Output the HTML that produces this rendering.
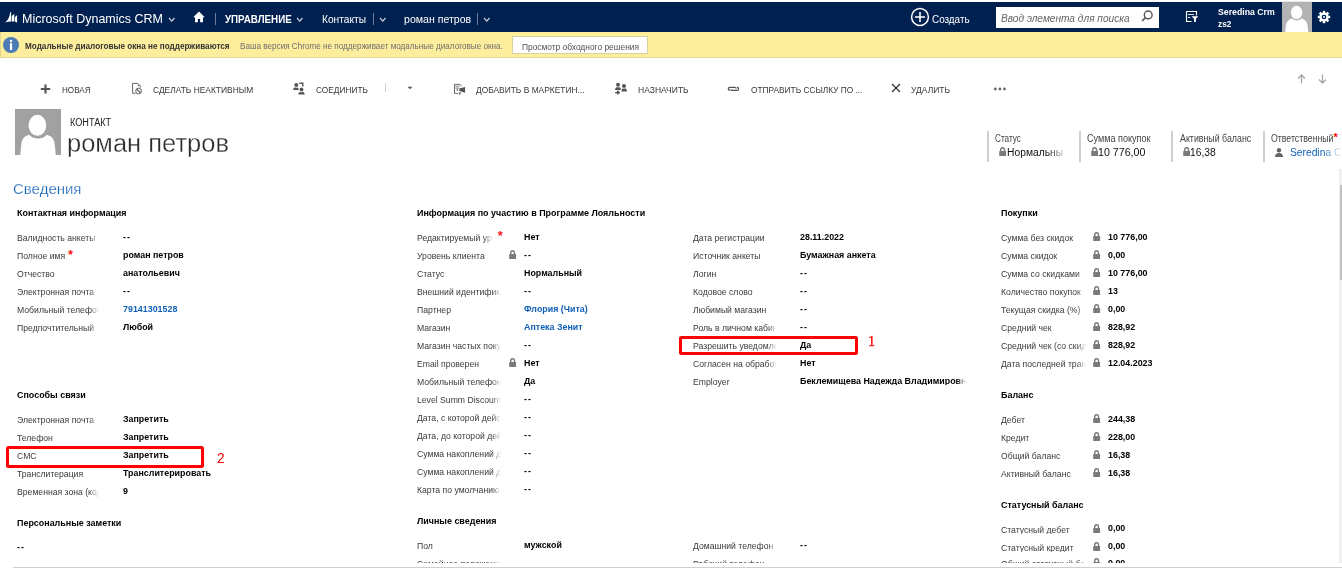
<!DOCTYPE html>
<html><head><meta charset="utf-8"><style>
html,body{margin:0;padding:0;background:#fff;width:1342px;height:568px;overflow:hidden;}
body{position:relative;font-family:"Liberation Sans", sans-serif;}
.t{position:absolute;white-space:nowrap;}
.i{display:inline-block;transform-origin:0 0;}
.r{position:absolute;}
svg.r{overflow:visible;}
</style></head><body>
<div class="r" style="left:0px;top:0px;width:1342px;height:2px;background:#ffffff;"></div>
<div class="r" style="left:1282px;top:1px;width:30px;height:1px;background:#e6e6e6;"></div>
<div class="r" style="left:0px;top:2px;width:1342px;height:30px;background:#002050;"></div>
<svg class="r" style="left:2px;top:8px" width="20" height="18" viewBox="0 0 20 18"><path d="M3 14.4 Q7 11.8 8.4 3.9 L9.1 3.7 L9.1 13.4 Q6 13.5 3 14.4 Z M9.7 13.4 L9.7 8.2 Q10.8 6.6 11.7 6.2 L12.3 6.2 L12.3 13.4 Z M12.9 13.5 L12.9 9.4 Q13.8 7.9 14.6 7.4 L15.1 7.4 L15.1 14.8 Q14 13.7 12.9 13.5 Z" fill="#fff"/></svg>
<div class="t" style="left:21.50px;top:13.03px;font-size:12.6px;line-height:12.6px;font-weight:400;color:#fff;"><span class="i" style="transform:scaleX(0.9926)">Microsoft Dynamics CRM</span></div>
<svg class="r" style="left:168px;top:17.0px" width="7.5" height="5.2" viewBox="0 0 7.5 5.2"><path d="M1 1 L3.75 4.2 L6.5 1" fill="none" stroke="#d0d6e0" stroke-width="1.2"/></svg>
<svg class="r" style="left:193px;top:11px" width="12" height="12" viewBox="0 0 12 12"><path d="M6 0.6 L0.2 6.2 L2 6.2 L2 11.2 L4.9 11.2 L4.9 8 L7.1 8 L7.1 11.2 L10 11.2 L10 6.2 L11.8 6.2 Z" fill="#fff"/></svg>
<div class="r" style="left:215px;top:13px;width:1px;height:12px;background:#6d7a96;"></div>
<div class="t" style="left:225.30px;top:14.09px;font-size:11px;line-height:11px;font-weight:700;color:#fff;"><span class="i" style="transform:scaleX(0.8895)">УПРАВЛЕНИЕ</span></div>
<svg class="r" style="left:296px;top:17.0px" width="7.5" height="5.2" viewBox="0 0 7.5 5.2"><path d="M1 1 L3.75 4.2 L6.5 1" fill="none" stroke="#c9d1de" stroke-width="1.2"/></svg>
<div class="t" style="left:322.00px;top:14.09px;font-size:11px;line-height:11px;font-weight:400;color:#fff;"><span class="i" style="transform:scaleX(0.9260)">Контакты</span></div>
<div class="r" style="left:373px;top:13px;width:1px;height:12px;background:#6d7a96;"></div>
<svg class="r" style="left:378.5px;top:17.0px" width="7.5" height="5.2" viewBox="0 0 7.5 5.2"><path d="M1 1 L3.75 4.2 L6.5 1" fill="none" stroke="#c9d1de" stroke-width="1.2"/></svg>
<div class="t" style="left:403.70px;top:14.09px;font-size:11px;line-height:11px;font-weight:400;color:#fff;"><span class="i" style="transform:scaleX(0.9617)">роман петров</span></div>
<div class="r" style="left:477px;top:13px;width:1px;height:12px;background:#6d7a96;"></div>
<svg class="r" style="left:482.5px;top:17.0px" width="7.5" height="5.2" viewBox="0 0 7.5 5.2"><path d="M1 1 L3.75 4.2 L6.5 1" fill="none" stroke="#c9d1de" stroke-width="1.2"/></svg>
<svg class="r" style="left:910px;top:7px" width="20" height="20" viewBox="0 0 20 20"><circle cx="10" cy="10" r="8.4" fill="none" stroke="#fff" stroke-width="1.5"/><path d="M10 5 V15 M5 10 H15" stroke="#fff" stroke-width="1.6"/></svg>
<div class="t" style="left:932.30px;top:14.39px;font-size:11px;line-height:11px;font-weight:400;color:#fff;"><span class="i" style="transform:scaleX(0.8993)">Создать</span></div>
<div class="r" style="left:996px;top:7px;width:163px;height:21px;background:#fff;"></div>
<div class="t" style="left:1000.80px;top:12.71px;font-size:10.5px;line-height:10.5px;font-weight:400;color:#666;font-style:italic;"><span class="i" style="transform:scaleX(0.9651)">Ввод элемента для поиска</span></div>
<svg class="r" style="left:1140px;top:10px" width="14" height="14" viewBox="0 0 14 14"><circle cx="8.2" cy="4.9" r="3.9" fill="none" stroke="#555" stroke-width="1.4"/><path d="M5.4 7.7 L2.2 10.9" stroke="#555" stroke-width="1.6"/></svg>
<svg class="r" style="left:1185px;top:10px" width="14" height="13" viewBox="0 0 14 13"><path d="M1.5 1.5 H11.5 V5.5 M1.5 1.5 V11.5 H6.5" fill="none" stroke="#fff" stroke-width="1.15"/><path d="M3 4.5 H9 M3 7.5 H5.3" stroke="#dfe3ea" stroke-width="1"/><path d="M6.6 6.2 H13.3 L10.9 9 V12 H9.1 V9 Z" fill="#fff" stroke="#002050" stroke-width="1" paint-order="stroke"/></svg>
<div class="t" style="left:1217.80px;top:7.26px;font-size:9.5px;line-height:9.5px;font-weight:700;color:#fff;"><span class="i" style="transform:scaleX(0.9178)">Seredina Crm</span></div>
<div class="t" style="left:1217.80px;top:19.46px;font-size:9.5px;line-height:9.5px;font-weight:700;color:#fff;"><span class="i" style="transform:scaleX(0.8700)">zs2</span></div>
<div class="r" style="left:1282px;top:2px;width:30px;height:30px;background:#b3b3b3;"></div>
<svg class="r" style="left:1282px;top:2px" width="30" height="30" viewBox="0 0 30 30"><ellipse cx="14.6" cy="10.4" rx="5.7" ry="6.7" fill="#fff"/><path d="M3.2 30 L3.8 23.5 C4.2 20 6 18 9.5 16.6 C11.5 18 13 18.4 14.7 18.4 C16.4 18.4 18 18 20 16.6 C23.5 18 25.3 20 25.6 23.5 L26.2 30 Z" fill="#fff"/></svg>
<svg class="r" style="left:1317px;top:10px" width="14" height="14" viewBox="0 0 14 14"><g transform="translate(7 7)" fill="#fff"><circle r="4.6"/><rect x="-1.25" y="-6.2" width="2.5" height="3" transform="rotate(0)"/><rect x="-1.25" y="-6.2" width="2.5" height="3" transform="rotate(45)"/><rect x="-1.25" y="-6.2" width="2.5" height="3" transform="rotate(90)"/><rect x="-1.25" y="-6.2" width="2.5" height="3" transform="rotate(135)"/><rect x="-1.25" y="-6.2" width="2.5" height="3" transform="rotate(180)"/><rect x="-1.25" y="-6.2" width="2.5" height="3" transform="rotate(225)"/><rect x="-1.25" y="-6.2" width="2.5" height="3" transform="rotate(270)"/><rect x="-1.25" y="-6.2" width="2.5" height="3" transform="rotate(315)"/><circle r="2.3" fill="#002050"/><circle r="1.0" fill="#fff"/></g></svg>
<div class="r" style="left:0px;top:32px;width:1342px;height:26px;background:#fdee9e;box-shadow:inset 1px 0 0 #e2d68c, inset 0 -1px 0 #e0d995;"></div>
<svg class="r" style="left:3px;top:37px" width="16" height="16" viewBox="0 0 16 16"><circle cx="8" cy="8" r="8" fill="#4c7bb5"/><rect x="6.9" y="6.2" width="2.2" height="6.8" fill="#fff"/><circle cx="8" cy="4" r="1.25" fill="#fff"/></svg>
<div class="t" style="left:24.60px;top:41.68px;font-size:9px;line-height:9px;font-weight:700;color:#333;"><span class="i" style="transform:scaleX(0.9072)">Модальные диалоговые окна не поддерживаются</span></div>
<div class="t" style="left:239.70px;top:41.68px;font-size:9px;line-height:9px;font-weight:400;color:#6f6f6f;"><span class="i" style="transform:scaleX(0.9043)">Ваша версия Chrome не поддерживает модальные диалоговые окна.</span></div>
<div class="r" style="left:512px;top:36px;width:136px;height:18px;background:#fff;box-sizing:border-box;border:1px solid #d9d29c;"></div>
<div class="t" style="left:522.00px;top:42.62px;font-size:8.6px;line-height:8.6px;font-weight:400;color:#505050;"><span class="i" style="transform:scaleX(0.9755)">Просмотр обходного решения</span></div>
<svg class="r" style="left:40px;top:84px" width="11" height="10" viewBox="0 0 11 10"><path d="M5.5 0.5 V9.5 M0.8 5 H10.2" stroke="#555" stroke-width="2.2"/></svg>
<div class="t" style="left:62.20px;top:85.37px;font-size:9.6px;line-height:9.6px;font-weight:400;color:#383838;"><span class="i" style="transform:scaleX(0.8458)">НОВАЯ</span></div>
<svg class="r" style="left:131px;top:82px" width="12" height="13" viewBox="0 0 12 13"><path d="M4.3 11.3 H1.6 V1.4 H6.6 L9.3 4.1 V5.6" fill="none" stroke="#666" stroke-width="1"/><path d="M6.8 1.4 L9.3 4 L7 4 Z" fill="#777"/><circle cx="7.6" cy="9" r="2.9" fill="none" stroke="#666" stroke-width="1"/><path d="M5.6 7 L9.6 11" stroke="#666" stroke-width="1.3"/></svg>
<div class="t" style="left:153.00px;top:85.37px;font-size:9.6px;line-height:9.6px;font-weight:400;color:#383838;"><span class="i" style="transform:scaleX(0.8769)">СДЕЛАТЬ НЕАКТИВНЫМ</span></div>
<svg class="r" style="left:292px;top:82px" width="14" height="13" viewBox="0 0 14 13"><circle cx="4.3" cy="2.9" r="2.0" fill="#555"/><path d="M1.1 8.1 Q1.2 5.5 3.5 5.3 L4.3 6.3 L5.1 5.3 Q6.6 5.5 6.8 8.1 Z" fill="#555"/><path d="M7.3 1.3 H10.8 V4.5" fill="none" stroke="#555" stroke-width="1.4"/><circle cx="9.5" cy="7.4" r="1.9" fill="#555"/><path d="M6.2 12.4 Q6.4 9.8 8.7 9.7 L9.5 10.6 L10.3 9.7 Q12.6 9.8 12.8 12.4 Z" fill="#555"/></svg>
<div class="t" style="left:315.80px;top:85.37px;font-size:9.6px;line-height:9.6px;font-weight:400;color:#383838;"><span class="i" style="transform:scaleX(0.8657)">СОЕДИНИТЬ</span></div>
<div class="r" style="left:385px;top:83px;width:1px;height:9px;background:#d0d0d0;"></div>
<svg class="r" style="left:407px;top:86px" width="6" height="4" viewBox="0 0 6 4"><path d="M0.5 0.8 H5.5 L3 3.3 Z" fill="#555"/></svg>
<svg class="r" style="left:452px;top:82px" width="14" height="13" viewBox="0 0 14 13"><path d="M6 11.4 H2.5 V2.4 H8 L9.6 4.2" fill="none" stroke="#666" stroke-width="1"/><path d="M3.4 4.3 H7.3 M3.4 6.1 H7.3" stroke="#777" stroke-width="0.9"/><rect x="4.8" y="6.9" width="1.1" height="1.9" fill="#555"/><path d="M7.3 6.6 L13.1 5 V10.8 L7.3 9 Z" fill="#555"/><rect x="7.1" y="10.1" width="1.4" height="2.4" fill="#555"/></svg>
<div class="t" style="left:475.50px;top:85.37px;font-size:9.6px;line-height:9.6px;font-weight:400;color:#383838;"><span class="i" style="transform:scaleX(0.8743)">ДОБАВИТЬ В МАРКЕТИН...</span></div>
<svg class="r" style="left:613px;top:82px" width="15" height="13" viewBox="0 0 15 13"><circle cx="5" cy="2.7" r="1.95" fill="#555"/><path d="M2 7.9 Q2.1 5.1 4.2 4.9 L5 5.8 L5.8 4.9 Q7.9 5.1 8 7.9 Z" fill="#555"/><circle cx="11" cy="3.9" r="2.0" fill="#555"/><path d="M8.4 9.5 Q8.5 6.4 10.2 6.2 L11 7.1 L11.8 6.2 Q13.9 6.4 14 9.5 Z" fill="#555"/><path d="M2 10.6 H5.8 M4.2 8.9 L6.2 10.6 L4.2 12.3" fill="none" stroke="#555" stroke-width="1.4"/></svg>
<div class="t" style="left:637.60px;top:85.37px;font-size:9.6px;line-height:9.6px;font-weight:400;color:#383838;"><span class="i" style="transform:scaleX(0.8887)">НАЗНАЧИТЬ</span></div>
<svg class="r" style="left:727px;top:85px" width="13" height="7" viewBox="0 0 13 7"><path d="M3 5.4 Q1.3 5.4 1.3 3.85 Q1.3 2.3 3 2.3 H7.6 Q9 2.3 9.4 3.5 M10 2.3 Q11.7 2.3 11.7 3.85 Q11.7 5.4 10 5.4 H5.4 Q4 5.4 3.6 4.2" fill="none" stroke="#555" stroke-width="1.25"/></svg>
<div class="t" style="left:750.90px;top:85.37px;font-size:9.6px;line-height:9.6px;font-weight:400;color:#383838;"><span class="i" style="transform:scaleX(0.8661)">ОТПРАВИТЬ ССЫЛКУ ПО ...</span></div>
<svg class="r" style="left:891px;top:83px" width="10" height="10" viewBox="0 0 10 10"><path d="M1 1 L9 9 M9 1 L1 9" stroke="#333" stroke-width="1.2"/></svg>
<div class="t" style="left:911.40px;top:85.37px;font-size:9.6px;line-height:9.6px;font-weight:400;color:#383838;"><span class="i" style="transform:scaleX(0.8861)">УДАЛИТЬ</span></div>
<svg class="r" style="left:993px;top:87px" width="14" height="4" viewBox="0 0 14 4"><circle cx="2.3" cy="2" r="1.4" fill="#666"/><circle cx="6.9" cy="2" r="1.4" fill="#666"/><circle cx="11.5" cy="2" r="1.4" fill="#666"/></svg>
<svg class="r" style="left:1297px;top:73.5px" width="9" height="10" viewBox="0 0 9 10"><path d="M4.5 1 V9.2 M1 4.5 L4.5 1 L8 4.5" fill="none" stroke="#a6a6a6" stroke-width="1.3"/></svg>
<svg class="r" style="left:1318px;top:73.5px" width="9" height="10" viewBox="0 0 9 10"><path d="M4.5 0.6 V9 M1 5.5 L4.5 9 L8 5.5" fill="none" stroke="#a6a6a6" stroke-width="1.3"/></svg>
<div class="r" style="left:15px;top:109px;width:46px;height:46px;background:#a1a1a1;"></div>
<svg class="r" style="left:15px;top:109px" width="46" height="46" viewBox="0 0 46 46"><ellipse cx="22.4" cy="16.3" rx="8.9" ry="10.5" fill="#fff"/><path d="M5.2 46 L6.3 35.5 C6.8 30 9 27.5 14 25.8 C17 28.5 19.5 29.5 23 29.6 C26.5 29.5 29 28.5 32 25.8 C37 27.5 39.2 30 39.7 35.5 L40.8 46 Z" fill="#fff"/></svg>
<div class="t" style="left:70.30px;top:118.13px;font-size:10.0px;line-height:10.0px;font-weight:400;color:#222;"><span class="i" style="transform:scaleX(0.9137)">КОНТАКТ</span></div>
<div class="t" style="left:67.40px;top:130.49px;font-size:26px;line-height:26px;font-weight:400;color:#2a2a2a;-webkit-text-stroke:0.35px #fff;"><span class="i" style="transform:scaleX(0.9809)">роман петров</span></div>
<div class="r" style="left:987px;top:131px;width:2px;height:31px;background:#cfcfcf;"></div>
<div class="r" style="left:1079px;top:131px;width:2px;height:31px;background:#cfcfcf;"></div>
<div class="r" style="left:1171px;top:131px;width:2px;height:31px;background:#cfcfcf;"></div>
<div class="r" style="left:1263px;top:131px;width:2px;height:31px;background:#cfcfcf;"></div>
<div class="t" style="left:995.20px;top:133.94px;font-size:10.0px;line-height:10.0px;font-weight:400;color:#444;"><span class="i" style="transform:scaleX(0.8190)">Статус</span></div>
<div class="t" style="left:1087.20px;top:133.94px;font-size:10.0px;line-height:10.0px;font-weight:400;color:#444;"><span class="i" style="transform:scaleX(0.9069)">Сумма покупок</span></div>
<div class="t" style="left:1179.60px;top:133.94px;font-size:10.0px;line-height:10.0px;font-weight:400;color:#444;"><span class="i" style="transform:scaleX(0.8822)">Активный баланс</span></div>
<div class="t" style="left:1271.30px;top:133.94px;font-size:10.0px;line-height:10.0px;font-weight:400;color:#444;"><span class="i" style="transform:scaleX(0.8751)">Ответственный</span></div>
<div class="t" style="left:1333.60px;top:131.69px;font-size:11px;line-height:11px;font-weight:700;color:#f00;"><span class="i" >*</span></div>
<svg class="r" style="left:998.8px;top:146.9px" width="8" height="9" viewBox="0 0 8 9"><path d="M1.7 4.2 V3.1 Q1.7 0.7 3.6 0.7 Q5.5 0.7 5.5 3.1 V4.2" fill="none" stroke="#7b7b7b" stroke-width="1.4"/><rect x="0.2" y="4" width="6.9" height="4.9" rx="0.4" fill="#7b7b7b"/></svg>
<div class="t" style="left:1006.90px;top:147.94px;font-size:10.0px;line-height:10.0px;font-weight:400;color:#111;width:62px;overflow:hidden;-webkit-mask-image:linear-gradient(to right,#000 40px,transparent 62px);"><span class="i" style="transform:scaleX(1.0300)">Нормальны</span></div>
<svg class="r" style="left:1090.8px;top:146.9px" width="8" height="9" viewBox="0 0 8 9"><path d="M1.7 4.2 V3.1 Q1.7 0.7 3.6 0.7 Q5.5 0.7 5.5 3.1 V4.2" fill="none" stroke="#7b7b7b" stroke-width="1.4"/><rect x="0.2" y="4" width="6.9" height="4.9" rx="0.4" fill="#7b7b7b"/></svg>
<div class="t" style="left:1098.30px;top:147.94px;font-size:10.0px;line-height:10.0px;font-weight:400;color:#111;"><span class="i" style="transform:scaleX(1.0652)">10 776,00</span></div>
<svg class="r" style="left:1182.8px;top:146.9px" width="8" height="9" viewBox="0 0 8 9"><path d="M1.7 4.2 V3.1 Q1.7 0.7 3.6 0.7 Q5.5 0.7 5.5 3.1 V4.2" fill="none" stroke="#7b7b7b" stroke-width="1.4"/><rect x="0.2" y="4" width="6.9" height="4.9" rx="0.4" fill="#7b7b7b"/></svg>
<div class="t" style="left:1189.80px;top:147.94px;font-size:10.0px;line-height:10.0px;font-weight:400;color:#111;"><span class="i" style="transform:scaleX(1.0267)">16,38</span></div>
<svg class="r" style="left:1275px;top:148px" width="8" height="9" viewBox="0 0 8 9"><circle cx="4" cy="2.3" r="2.2" fill="#666"/><path d="M0 9 Q0 5 4 5 Q8 5 8 9 Z" fill="#666"/></svg>
<div class="t" style="left:1289.90px;top:147.68px;font-size:10.3px;line-height:10.3px;font-weight:400;color:#1160b7;width:52px;overflow:hidden;-webkit-mask-image:linear-gradient(to right,#000 32px,transparent 52px);"><span class="i" style="transform:scaleX(1.0000)">Seredina C</span></div>
<div class="r" style="left:1339px;top:169px;width:3px;height:394px;background:#f0f0f0;"></div>
<div class="r" style="left:1340px;top:185px;width:2px;height:95px;background:#c2c2c2;"></div>
<div class="r" style="left:13px;top:567px;width:1329px;height:1px;background:#cfcfcf;"></div>
<div class="t" style="left:13.30px;top:181.35px;font-size:15.3px;line-height:15.3px;font-weight:400;color:#1462b8;-webkit-text-stroke:0.25px #fff;"><span class="i" style="transform:scaleX(0.9801)">Сведения</span></div>
<div class="t" style="left:16.50px;top:207.86px;font-size:9.5px;line-height:9.5px;font-weight:700;color:#000;"><span class="i" style="transform:scaleX(0.9400)">Контактная информация</span></div>
<div class="t" style="left:16.50px;top:233.46px;font-size:9.5px;line-height:9.5px;font-weight:400;color:#3a3a3a;width:82px;overflow:hidden;-webkit-mask-image:linear-gradient(to right,#000 73px,transparent 82px);"><span class="i" style="transform:scaleX(0.9100)">Валидность анкеты</span></div>
<div class="t" style="left:123.00px;top:231.96px;font-size:9.5px;line-height:9.5px;font-weight:700;color:#000;letter-spacing:1.1px;"><span class="i" style="transform:scaleX(0.9350)">--</span></div>
<div class="t" style="left:16.50px;top:251.46px;font-size:9.5px;line-height:9.5px;font-weight:400;color:#3a3a3a;width:82px;overflow:hidden;-webkit-mask-image:linear-gradient(to right,#000 73px,transparent 82px);"><span class="i" style="transform:scaleX(0.9100)">Полное имя</span></div>
<div class="t" style="left:67.90px;top:247.60px;font-size:13px;line-height:13px;font-weight:400;color:#f00;-webkit-text-stroke:0.25px #f00;"><span class="i" >*</span></div>
<div class="t" style="left:123.00px;top:249.96px;font-size:9.5px;line-height:9.5px;font-weight:700;color:#000;"><span class="i" style="transform:scaleX(0.9350)">роман петров</span></div>
<div class="t" style="left:16.50px;top:269.46px;font-size:9.5px;line-height:9.5px;font-weight:400;color:#3a3a3a;width:82px;overflow:hidden;-webkit-mask-image:linear-gradient(to right,#000 73px,transparent 82px);"><span class="i" style="transform:scaleX(0.9100)">Отчество</span></div>
<div class="t" style="left:123.00px;top:267.96px;font-size:9.5px;line-height:9.5px;font-weight:700;color:#000;"><span class="i" style="transform:scaleX(0.9350)">анатольевич</span></div>
<div class="t" style="left:16.50px;top:287.46px;font-size:9.5px;line-height:9.5px;font-weight:400;color:#3a3a3a;width:82px;overflow:hidden;-webkit-mask-image:linear-gradient(to right,#000 73px,transparent 82px);"><span class="i" style="transform:scaleX(0.9100)">Электронная почта</span></div>
<div class="t" style="left:123.00px;top:285.96px;font-size:9.5px;line-height:9.5px;font-weight:700;color:#000;letter-spacing:1.1px;"><span class="i" style="transform:scaleX(0.9350)">--</span></div>
<div class="t" style="left:16.50px;top:305.46px;font-size:9.5px;line-height:9.5px;font-weight:400;color:#3a3a3a;width:82px;overflow:hidden;-webkit-mask-image:linear-gradient(to right,#000 73px,transparent 82px);"><span class="i" style="transform:scaleX(0.9100)">Мобильный телефон</span></div>
<div class="t" style="left:123.00px;top:303.96px;font-size:9.5px;line-height:9.5px;font-weight:700;color:#1160b7;"><span class="i" style="transform:scaleX(0.9350)">79141301528</span></div>
<div class="t" style="left:16.50px;top:323.46px;font-size:9.5px;line-height:9.5px;font-weight:400;color:#3a3a3a;width:82px;overflow:hidden;-webkit-mask-image:linear-gradient(to right,#000 73px,transparent 82px);"><span class="i" style="transform:scaleX(0.9100)">Предпочтительный</span></div>
<div class="t" style="left:123.00px;top:321.96px;font-size:9.5px;line-height:9.5px;font-weight:700;color:#000;"><span class="i" style="transform:scaleX(0.9350)">Любой</span></div>
<div class="t" style="left:16.50px;top:390.46px;font-size:9.5px;line-height:9.5px;font-weight:700;color:#000;"><span class="i" style="transform:scaleX(0.9400)">Способы связи</span></div>
<div class="t" style="left:16.50px;top:415.46px;font-size:9.5px;line-height:9.5px;font-weight:400;color:#3a3a3a;width:82px;overflow:hidden;-webkit-mask-image:linear-gradient(to right,#000 73px,transparent 82px);"><span class="i" style="transform:scaleX(0.9100)">Электронная почта</span></div>
<div class="t" style="left:123.00px;top:413.96px;font-size:9.5px;line-height:9.5px;font-weight:700;color:#000;"><span class="i" style="transform:scaleX(0.9350)">Запретить</span></div>
<div class="t" style="left:16.50px;top:433.46px;font-size:9.5px;line-height:9.5px;font-weight:400;color:#3a3a3a;width:82px;overflow:hidden;-webkit-mask-image:linear-gradient(to right,#000 73px,transparent 82px);"><span class="i" style="transform:scaleX(0.9100)">Телефон</span></div>
<div class="t" style="left:123.00px;top:431.96px;font-size:9.5px;line-height:9.5px;font-weight:700;color:#000;"><span class="i" style="transform:scaleX(0.9350)">Запретить</span></div>
<div class="t" style="left:16.50px;top:451.46px;font-size:9.5px;line-height:9.5px;font-weight:400;color:#3a3a3a;width:82px;overflow:hidden;-webkit-mask-image:linear-gradient(to right,#000 73px,transparent 82px);"><span class="i" style="transform:scaleX(0.9100)">СМС</span></div>
<div class="t" style="left:123.00px;top:449.96px;font-size:9.5px;line-height:9.5px;font-weight:700;color:#000;"><span class="i" style="transform:scaleX(0.9350)">Запретить</span></div>
<div class="t" style="left:16.50px;top:469.46px;font-size:9.5px;line-height:9.5px;font-weight:400;color:#3a3a3a;width:82px;overflow:hidden;-webkit-mask-image:linear-gradient(to right,#000 73px,transparent 82px);"><span class="i" style="transform:scaleX(0.9100)">Транслитерация</span></div>
<div class="t" style="left:123.00px;top:467.96px;font-size:9.5px;line-height:9.5px;font-weight:700;color:#000;"><span class="i" style="transform:scaleX(0.9350)">Транслитерировать</span></div>
<div class="t" style="left:16.50px;top:487.46px;font-size:9.5px;line-height:9.5px;font-weight:400;color:#3a3a3a;width:82px;overflow:hidden;-webkit-mask-image:linear-gradient(to right,#000 73px,transparent 82px);"><span class="i" style="transform:scaleX(0.9100)">Временная зона (код)</span></div>
<div class="t" style="left:123.00px;top:485.96px;font-size:9.5px;line-height:9.5px;font-weight:700;color:#000;"><span class="i" style="transform:scaleX(0.9350)">9</span></div>
<div class="t" style="left:16.50px;top:518.26px;font-size:9.5px;line-height:9.5px;font-weight:700;color:#000;"><span class="i" style="transform:scaleX(0.9400)">Персональные заметки</span></div>
<div class="t" style="left:16.50px;top:541.96px;font-size:9.5px;line-height:9.5px;font-weight:700;color:#000;letter-spacing:1.1px;"><span class="i" style="transform:scaleX(0.9350)">--</span></div>
<div class="t" style="left:417.30px;top:208.46px;font-size:9.5px;line-height:9.5px;font-weight:700;color:#000;"><span class="i" style="transform:scaleX(0.9431)">Информация по участию в Программе Лояльности</span></div>
<div class="t" style="left:417.30px;top:233.46px;font-size:9.5px;line-height:9.5px;font-weight:400;color:#3a3a3a;width:76px;overflow:hidden;-webkit-mask-image:linear-gradient(to right,#000 67px,transparent 76px);"><span class="i" style="transform:scaleX(0.9100)">Редактируемый уровень</span></div>
<div class="t" style="left:497.70px;top:229.00px;font-size:13px;line-height:13px;font-weight:400;color:#f00;-webkit-text-stroke:0.25px #f00;"><span class="i" >*</span></div>
<div class="t" style="left:524.00px;top:231.96px;font-size:9.5px;line-height:9.5px;font-weight:700;color:#000;"><span class="i" style="transform:scaleX(0.9350)">Нет</span></div>
<div class="t" style="left:417.30px;top:251.46px;font-size:9.5px;line-height:9.5px;font-weight:400;color:#3a3a3a;width:84px;overflow:hidden;-webkit-mask-image:linear-gradient(to right,#000 75px,transparent 84px);"><span class="i" style="transform:scaleX(0.9100)">Уровень клиента</span></div>
<svg class="r" style="left:509.1px;top:250.3px" width="8" height="9" viewBox="0 0 8 9"><path d="M1.7 4.2 V3.1 Q1.7 0.7 3.6 0.7 Q5.5 0.7 5.5 3.1 V4.2" fill="none" stroke="#7b7b7b" stroke-width="1.4"/><rect x="0.2" y="4" width="6.9" height="4.9" rx="0.4" fill="#7b7b7b"/></svg>
<div class="t" style="left:524.00px;top:249.96px;font-size:9.5px;line-height:9.5px;font-weight:700;color:#000;letter-spacing:1.1px;"><span class="i" style="transform:scaleX(0.9350)">--</span></div>
<div class="t" style="left:417.30px;top:269.46px;font-size:9.5px;line-height:9.5px;font-weight:400;color:#3a3a3a;width:84px;overflow:hidden;-webkit-mask-image:linear-gradient(to right,#000 75px,transparent 84px);"><span class="i" style="transform:scaleX(0.9100)">Статус</span></div>
<div class="t" style="left:524.00px;top:267.96px;font-size:9.5px;line-height:9.5px;font-weight:700;color:#000;"><span class="i" style="transform:scaleX(0.9350)">Нормальный</span></div>
<div class="t" style="left:417.30px;top:287.46px;font-size:9.5px;line-height:9.5px;font-weight:400;color:#3a3a3a;width:84px;overflow:hidden;-webkit-mask-image:linear-gradient(to right,#000 75px,transparent 84px);"><span class="i" style="transform:scaleX(0.9100)">Внешний идентификатор</span></div>
<div class="t" style="left:524.00px;top:285.96px;font-size:9.5px;line-height:9.5px;font-weight:700;color:#000;letter-spacing:1.1px;"><span class="i" style="transform:scaleX(0.9350)">--</span></div>
<div class="t" style="left:417.30px;top:305.46px;font-size:9.5px;line-height:9.5px;font-weight:400;color:#3a3a3a;width:84px;overflow:hidden;-webkit-mask-image:linear-gradient(to right,#000 75px,transparent 84px);"><span class="i" style="transform:scaleX(0.9100)">Партнер</span></div>
<div class="t" style="left:524.00px;top:303.96px;font-size:9.5px;line-height:9.5px;font-weight:700;color:#1160b7;"><span class="i" style="transform:scaleX(0.9350)">Флория (Чита)</span></div>
<div class="t" style="left:417.30px;top:323.46px;font-size:9.5px;line-height:9.5px;font-weight:400;color:#3a3a3a;width:84px;overflow:hidden;-webkit-mask-image:linear-gradient(to right,#000 75px,transparent 84px);"><span class="i" style="transform:scaleX(0.9100)">Магазин</span></div>
<div class="t" style="left:524.00px;top:321.96px;font-size:9.5px;line-height:9.5px;font-weight:700;color:#1160b7;"><span class="i" style="transform:scaleX(0.9350)">Аптека Зенит</span></div>
<div class="t" style="left:417.30px;top:341.46px;font-size:9.5px;line-height:9.5px;font-weight:400;color:#3a3a3a;width:84px;overflow:hidden;-webkit-mask-image:linear-gradient(to right,#000 75px,transparent 84px);"><span class="i" style="transform:scaleX(0.9100)">Магазин частых покупок</span></div>
<div class="t" style="left:524.00px;top:339.96px;font-size:9.5px;line-height:9.5px;font-weight:700;color:#000;letter-spacing:1.1px;"><span class="i" style="transform:scaleX(0.9350)">--</span></div>
<div class="t" style="left:417.30px;top:359.46px;font-size:9.5px;line-height:9.5px;font-weight:400;color:#3a3a3a;width:84px;overflow:hidden;-webkit-mask-image:linear-gradient(to right,#000 75px,transparent 84px);"><span class="i" style="transform:scaleX(0.9100)">Email проверен</span></div>
<svg class="r" style="left:509.1px;top:358.3px" width="8" height="9" viewBox="0 0 8 9"><path d="M1.7 4.2 V3.1 Q1.7 0.7 3.6 0.7 Q5.5 0.7 5.5 3.1 V4.2" fill="none" stroke="#7b7b7b" stroke-width="1.4"/><rect x="0.2" y="4" width="6.9" height="4.9" rx="0.4" fill="#7b7b7b"/></svg>
<div class="t" style="left:524.00px;top:357.96px;font-size:9.5px;line-height:9.5px;font-weight:700;color:#000;"><span class="i" style="transform:scaleX(0.9350)">Нет</span></div>
<div class="t" style="left:417.30px;top:377.46px;font-size:9.5px;line-height:9.5px;font-weight:400;color:#3a3a3a;width:84px;overflow:hidden;-webkit-mask-image:linear-gradient(to right,#000 75px,transparent 84px);"><span class="i" style="transform:scaleX(0.9100)">Мобильный телефон</span></div>
<div class="t" style="left:524.00px;top:375.96px;font-size:9.5px;line-height:9.5px;font-weight:700;color:#000;"><span class="i" style="transform:scaleX(0.9350)">Да</span></div>
<div class="t" style="left:417.30px;top:395.46px;font-size:9.5px;line-height:9.5px;font-weight:400;color:#3a3a3a;width:84px;overflow:hidden;-webkit-mask-image:linear-gradient(to right,#000 75px,transparent 84px);"><span class="i" style="transform:scaleX(0.9100)">Level Summ Discount</span></div>
<div class="t" style="left:524.00px;top:393.96px;font-size:9.5px;line-height:9.5px;font-weight:700;color:#000;letter-spacing:1.1px;"><span class="i" style="transform:scaleX(0.9350)">--</span></div>
<div class="t" style="left:417.30px;top:413.46px;font-size:9.5px;line-height:9.5px;font-weight:400;color:#3a3a3a;width:84px;overflow:hidden;-webkit-mask-image:linear-gradient(to right,#000 75px,transparent 84px);"><span class="i" style="transform:scaleX(0.9100)">Дата, с которой действует</span></div>
<div class="t" style="left:524.00px;top:411.96px;font-size:9.5px;line-height:9.5px;font-weight:700;color:#000;letter-spacing:1.1px;"><span class="i" style="transform:scaleX(0.9350)">--</span></div>
<div class="t" style="left:417.30px;top:431.46px;font-size:9.5px;line-height:9.5px;font-weight:400;color:#3a3a3a;width:84px;overflow:hidden;-webkit-mask-image:linear-gradient(to right,#000 75px,transparent 84px);"><span class="i" style="transform:scaleX(0.9100)">Дата, до которой действует</span></div>
<div class="t" style="left:524.00px;top:429.96px;font-size:9.5px;line-height:9.5px;font-weight:700;color:#000;letter-spacing:1.1px;"><span class="i" style="transform:scaleX(0.9350)">--</span></div>
<div class="t" style="left:417.30px;top:449.46px;font-size:9.5px;line-height:9.5px;font-weight:400;color:#3a3a3a;width:84px;overflow:hidden;-webkit-mask-image:linear-gradient(to right,#000 75px,transparent 84px);"><span class="i" style="transform:scaleX(0.9100)">Сумма накоплений до</span></div>
<div class="t" style="left:524.00px;top:447.96px;font-size:9.5px;line-height:9.5px;font-weight:700;color:#000;letter-spacing:1.1px;"><span class="i" style="transform:scaleX(0.9350)">--</span></div>
<div class="t" style="left:417.30px;top:467.46px;font-size:9.5px;line-height:9.5px;font-weight:400;color:#3a3a3a;width:84px;overflow:hidden;-webkit-mask-image:linear-gradient(to right,#000 75px,transparent 84px);"><span class="i" style="transform:scaleX(0.9100)">Сумма накоплений для</span></div>
<div class="t" style="left:524.00px;top:465.96px;font-size:9.5px;line-height:9.5px;font-weight:700;color:#000;letter-spacing:1.1px;"><span class="i" style="transform:scaleX(0.9350)">--</span></div>
<div class="t" style="left:417.30px;top:485.46px;font-size:9.5px;line-height:9.5px;font-weight:400;color:#3a3a3a;width:84px;overflow:hidden;-webkit-mask-image:linear-gradient(to right,#000 75px,transparent 84px);"><span class="i" style="transform:scaleX(0.9100)">Карта по умолчанию</span></div>
<div class="t" style="left:524.00px;top:483.96px;font-size:9.5px;line-height:9.5px;font-weight:700;color:#000;letter-spacing:1.1px;"><span class="i" style="transform:scaleX(0.9350)">--</span></div>
<div class="t" style="left:417.30px;top:515.86px;font-size:9.5px;line-height:9.5px;font-weight:700;color:#000;"><span class="i" style="transform:scaleX(0.9400)">Личные сведения</span></div>
<div class="t" style="left:417.30px;top:541.46px;font-size:9.5px;line-height:9.5px;font-weight:400;color:#3a3a3a;width:84px;overflow:hidden;-webkit-mask-image:linear-gradient(to right,#000 75px,transparent 84px);"><span class="i" style="transform:scaleX(0.9100)">Пол</span></div>
<div class="t" style="left:524.00px;top:539.96px;font-size:9.5px;line-height:9.5px;font-weight:700;color:#000;"><span class="i" style="transform:scaleX(0.9350)">мужской</span></div>
<div class="r" style="left:0;top:555px;width:1338px;height:7.5px;overflow:hidden">
<div class="t" style="left:417.30px;top:4.46px;font-size:9.5px;line-height:9.5px;font-weight:400;color:#3a3a3a;width:84px;overflow:hidden;-webkit-mask-image:linear-gradient(to right,#000 75px,transparent 84px);"><span class="i" style="transform:scaleX(0.9100)">Семейное положение</span></div>
<div class="t" style="left:692.70px;top:4.46px;font-size:9.5px;line-height:9.5px;font-weight:400;color:#3a3a3a;width:84px;overflow:hidden;-webkit-mask-image:linear-gradient(to right,#000 75px,transparent 84px);"><span class="i" style="transform:scaleX(0.9100)">Рабочий телефон</span></div>
<div class="t" style="left:1001.30px;top:4.46px;font-size:9.5px;line-height:9.5px;font-weight:400;color:#3a3a3a;width:85px;overflow:hidden;-webkit-mask-image:linear-gradient(to right,#000 76px,transparent 85px);"><span class="i" style="transform:scaleX(0.9100)">Общий статусный баланс</span></div>
<svg class="r" style="left:1093.3px;top:3.2999999999999545px" width="8" height="9" viewBox="0 0 8 9"><path d="M1.7 4.2 V3.1 Q1.7 0.7 3.6 0.7 Q5.5 0.7 5.5 3.1 V4.2" fill="none" stroke="#7b7b7b" stroke-width="1.4"/><rect x="0.2" y="4" width="6.9" height="4.9" rx="0.4" fill="#7b7b7b"/></svg>
<div class="t" style="left:1107.80px;top:2.96px;font-size:9.5px;line-height:9.5px;font-weight:700;color:#000;"><span class="i" style="transform:scaleX(0.9350)">0,00</span></div>
</div>
<div class="t" style="left:692.70px;top:233.46px;font-size:9.5px;line-height:9.5px;font-weight:400;color:#3a3a3a;width:84px;overflow:hidden;-webkit-mask-image:linear-gradient(to right,#000 75px,transparent 84px);"><span class="i" style="transform:scaleX(0.9100)">Дата регистрации</span></div>
<div class="t" style="left:799.50px;top:231.96px;font-size:9.5px;line-height:9.5px;font-weight:700;color:#000;"><span class="i" style="transform:scaleX(0.9350)">28.11.2022</span></div>
<div class="t" style="left:692.70px;top:251.46px;font-size:9.5px;line-height:9.5px;font-weight:400;color:#3a3a3a;width:84px;overflow:hidden;-webkit-mask-image:linear-gradient(to right,#000 75px,transparent 84px);"><span class="i" style="transform:scaleX(0.9100)">Источник анкеты</span></div>
<div class="t" style="left:799.50px;top:249.96px;font-size:9.5px;line-height:9.5px;font-weight:700;color:#000;"><span class="i" style="transform:scaleX(0.9350)">Бумажная анкета</span></div>
<div class="t" style="left:692.70px;top:269.46px;font-size:9.5px;line-height:9.5px;font-weight:400;color:#3a3a3a;width:84px;overflow:hidden;-webkit-mask-image:linear-gradient(to right,#000 75px,transparent 84px);"><span class="i" style="transform:scaleX(0.9100)">Логин</span></div>
<div class="t" style="left:799.50px;top:267.96px;font-size:9.5px;line-height:9.5px;font-weight:700;color:#000;letter-spacing:1.1px;"><span class="i" style="transform:scaleX(0.9350)">--</span></div>
<div class="t" style="left:692.70px;top:287.46px;font-size:9.5px;line-height:9.5px;font-weight:400;color:#3a3a3a;width:84px;overflow:hidden;-webkit-mask-image:linear-gradient(to right,#000 75px,transparent 84px);"><span class="i" style="transform:scaleX(0.9100)">Кодовое слово</span></div>
<div class="t" style="left:799.50px;top:285.96px;font-size:9.5px;line-height:9.5px;font-weight:700;color:#000;letter-spacing:1.1px;"><span class="i" style="transform:scaleX(0.9350)">--</span></div>
<div class="t" style="left:692.70px;top:305.46px;font-size:9.5px;line-height:9.5px;font-weight:400;color:#3a3a3a;width:84px;overflow:hidden;-webkit-mask-image:linear-gradient(to right,#000 75px,transparent 84px);"><span class="i" style="transform:scaleX(0.9100)">Любимый магазин</span></div>
<div class="t" style="left:799.50px;top:303.96px;font-size:9.5px;line-height:9.5px;font-weight:700;color:#000;letter-spacing:1.1px;"><span class="i" style="transform:scaleX(0.9350)">--</span></div>
<div class="t" style="left:692.70px;top:323.46px;font-size:9.5px;line-height:9.5px;font-weight:400;color:#3a3a3a;width:84px;overflow:hidden;-webkit-mask-image:linear-gradient(to right,#000 75px,transparent 84px);"><span class="i" style="transform:scaleX(0.9100)">Роль в личном кабинете</span></div>
<div class="t" style="left:799.50px;top:321.96px;font-size:9.5px;line-height:9.5px;font-weight:700;color:#000;letter-spacing:1.1px;"><span class="i" style="transform:scaleX(0.9350)">--</span></div>
<div class="t" style="left:692.70px;top:341.46px;font-size:9.5px;line-height:9.5px;font-weight:400;color:#3a3a3a;width:84px;overflow:hidden;-webkit-mask-image:linear-gradient(to right,#000 75px,transparent 84px);"><span class="i" style="transform:scaleX(0.9100)">Разрешить уведомления</span></div>
<div class="t" style="left:799.50px;top:339.96px;font-size:9.5px;line-height:9.5px;font-weight:700;color:#000;"><span class="i" style="transform:scaleX(0.9350)">Да</span></div>
<div class="t" style="left:692.70px;top:359.46px;font-size:9.5px;line-height:9.5px;font-weight:400;color:#3a3a3a;width:84px;overflow:hidden;-webkit-mask-image:linear-gradient(to right,#000 75px,transparent 84px);"><span class="i" style="transform:scaleX(0.9100)">Согласен на обработку</span></div>
<div class="t" style="left:799.50px;top:357.96px;font-size:9.5px;line-height:9.5px;font-weight:700;color:#000;"><span class="i" style="transform:scaleX(0.9350)">Нет</span></div>
<div class="t" style="left:692.70px;top:377.46px;font-size:9.5px;line-height:9.5px;font-weight:400;color:#3a3a3a;width:84px;overflow:hidden;-webkit-mask-image:linear-gradient(to right,#000 75px,transparent 84px);"><span class="i" style="transform:scaleX(0.9100)">Employer</span></div>
<div class="t" style="left:799.50px;top:375.96px;font-size:9.5px;line-height:9.5px;font-weight:700;color:#000;width:166px;overflow:hidden;-webkit-mask-image:linear-gradient(to right,#000 157px,transparent 166px);"><span class="i" style="transform:scaleX(0.9350)">Беклемищева Надежда Владимировна</span></div>
<div class="t" style="left:692.70px;top:541.46px;font-size:9.5px;line-height:9.5px;font-weight:400;color:#3a3a3a;width:84px;overflow:hidden;-webkit-mask-image:linear-gradient(to right,#000 75px,transparent 84px);"><span class="i" style="transform:scaleX(0.9100)">Домашний телефон</span></div>
<div class="t" style="left:800.00px;top:539.96px;font-size:9.5px;line-height:9.5px;font-weight:700;color:#000;letter-spacing:1.1px;"><span class="i" style="transform:scaleX(0.9350)">--</span></div>
<div class="t" style="left:1001.30px;top:208.46px;font-size:9.5px;line-height:9.5px;font-weight:700;color:#000;"><span class="i" style="transform:scaleX(0.9400)">Покупки</span></div>
<div class="t" style="left:1001.30px;top:233.46px;font-size:9.5px;line-height:9.5px;font-weight:400;color:#3a3a3a;width:85px;overflow:hidden;-webkit-mask-image:linear-gradient(to right,#000 76px,transparent 85px);"><span class="i" style="transform:scaleX(0.9100)">Сумма без скидок</span></div>
<svg class="r" style="left:1093.3px;top:232.3px" width="8" height="9" viewBox="0 0 8 9"><path d="M1.7 4.2 V3.1 Q1.7 0.7 3.6 0.7 Q5.5 0.7 5.5 3.1 V4.2" fill="none" stroke="#7b7b7b" stroke-width="1.4"/><rect x="0.2" y="4" width="6.9" height="4.9" rx="0.4" fill="#7b7b7b"/></svg>
<div class="t" style="left:1107.80px;top:231.96px;font-size:9.5px;line-height:9.5px;font-weight:700;color:#000;"><span class="i" style="transform:scaleX(0.9350)">10 776,00</span></div>
<div class="t" style="left:1001.30px;top:251.46px;font-size:9.5px;line-height:9.5px;font-weight:400;color:#3a3a3a;width:85px;overflow:hidden;-webkit-mask-image:linear-gradient(to right,#000 76px,transparent 85px);"><span class="i" style="transform:scaleX(0.9100)">Сумма скидок</span></div>
<svg class="r" style="left:1093.3px;top:250.3px" width="8" height="9" viewBox="0 0 8 9"><path d="M1.7 4.2 V3.1 Q1.7 0.7 3.6 0.7 Q5.5 0.7 5.5 3.1 V4.2" fill="none" stroke="#7b7b7b" stroke-width="1.4"/><rect x="0.2" y="4" width="6.9" height="4.9" rx="0.4" fill="#7b7b7b"/></svg>
<div class="t" style="left:1107.80px;top:249.96px;font-size:9.5px;line-height:9.5px;font-weight:700;color:#000;"><span class="i" style="transform:scaleX(0.9350)">0,00</span></div>
<div class="t" style="left:1001.30px;top:269.46px;font-size:9.5px;line-height:9.5px;font-weight:400;color:#3a3a3a;width:85px;overflow:hidden;-webkit-mask-image:linear-gradient(to right,#000 76px,transparent 85px);"><span class="i" style="transform:scaleX(0.9100)">Сумма со скидками</span></div>
<svg class="r" style="left:1093.3px;top:268.3px" width="8" height="9" viewBox="0 0 8 9"><path d="M1.7 4.2 V3.1 Q1.7 0.7 3.6 0.7 Q5.5 0.7 5.5 3.1 V4.2" fill="none" stroke="#7b7b7b" stroke-width="1.4"/><rect x="0.2" y="4" width="6.9" height="4.9" rx="0.4" fill="#7b7b7b"/></svg>
<div class="t" style="left:1107.80px;top:267.96px;font-size:9.5px;line-height:9.5px;font-weight:700;color:#000;"><span class="i" style="transform:scaleX(0.9350)">10 776,00</span></div>
<div class="t" style="left:1001.30px;top:287.46px;font-size:9.5px;line-height:9.5px;font-weight:400;color:#3a3a3a;width:85px;overflow:hidden;-webkit-mask-image:linear-gradient(to right,#000 76px,transparent 85px);"><span class="i" style="transform:scaleX(0.9100)">Количество покупок</span></div>
<svg class="r" style="left:1093.3px;top:286.3px" width="8" height="9" viewBox="0 0 8 9"><path d="M1.7 4.2 V3.1 Q1.7 0.7 3.6 0.7 Q5.5 0.7 5.5 3.1 V4.2" fill="none" stroke="#7b7b7b" stroke-width="1.4"/><rect x="0.2" y="4" width="6.9" height="4.9" rx="0.4" fill="#7b7b7b"/></svg>
<div class="t" style="left:1107.80px;top:285.96px;font-size:9.5px;line-height:9.5px;font-weight:700;color:#000;"><span class="i" style="transform:scaleX(0.9350)">13</span></div>
<div class="t" style="left:1001.30px;top:305.46px;font-size:9.5px;line-height:9.5px;font-weight:400;color:#3a3a3a;width:85px;overflow:hidden;-webkit-mask-image:linear-gradient(to right,#000 76px,transparent 85px);"><span class="i" style="transform:scaleX(0.9100)">Текущая скидка (%)</span></div>
<svg class="r" style="left:1093.3px;top:304.3px" width="8" height="9" viewBox="0 0 8 9"><path d="M1.7 4.2 V3.1 Q1.7 0.7 3.6 0.7 Q5.5 0.7 5.5 3.1 V4.2" fill="none" stroke="#7b7b7b" stroke-width="1.4"/><rect x="0.2" y="4" width="6.9" height="4.9" rx="0.4" fill="#7b7b7b"/></svg>
<div class="t" style="left:1107.80px;top:303.96px;font-size:9.5px;line-height:9.5px;font-weight:700;color:#000;"><span class="i" style="transform:scaleX(0.9350)">0,00</span></div>
<div class="t" style="left:1001.30px;top:323.46px;font-size:9.5px;line-height:9.5px;font-weight:400;color:#3a3a3a;width:85px;overflow:hidden;-webkit-mask-image:linear-gradient(to right,#000 76px,transparent 85px);"><span class="i" style="transform:scaleX(0.9100)">Средний чек</span></div>
<svg class="r" style="left:1093.3px;top:322.3px" width="8" height="9" viewBox="0 0 8 9"><path d="M1.7 4.2 V3.1 Q1.7 0.7 3.6 0.7 Q5.5 0.7 5.5 3.1 V4.2" fill="none" stroke="#7b7b7b" stroke-width="1.4"/><rect x="0.2" y="4" width="6.9" height="4.9" rx="0.4" fill="#7b7b7b"/></svg>
<div class="t" style="left:1107.80px;top:321.96px;font-size:9.5px;line-height:9.5px;font-weight:700;color:#000;"><span class="i" style="transform:scaleX(0.9350)">828,92</span></div>
<div class="t" style="left:1001.30px;top:341.46px;font-size:9.5px;line-height:9.5px;font-weight:400;color:#3a3a3a;width:85px;overflow:hidden;-webkit-mask-image:linear-gradient(to right,#000 76px,transparent 85px);"><span class="i" style="transform:scaleX(0.9100)">Средний чек (со скидкой)</span></div>
<svg class="r" style="left:1093.3px;top:340.3px" width="8" height="9" viewBox="0 0 8 9"><path d="M1.7 4.2 V3.1 Q1.7 0.7 3.6 0.7 Q5.5 0.7 5.5 3.1 V4.2" fill="none" stroke="#7b7b7b" stroke-width="1.4"/><rect x="0.2" y="4" width="6.9" height="4.9" rx="0.4" fill="#7b7b7b"/></svg>
<div class="t" style="left:1107.80px;top:339.96px;font-size:9.5px;line-height:9.5px;font-weight:700;color:#000;"><span class="i" style="transform:scaleX(0.9350)">828,92</span></div>
<div class="t" style="left:1001.30px;top:359.46px;font-size:9.5px;line-height:9.5px;font-weight:400;color:#3a3a3a;width:85px;overflow:hidden;-webkit-mask-image:linear-gradient(to right,#000 76px,transparent 85px);"><span class="i" style="transform:scaleX(0.9100)">Дата последней транзакции</span></div>
<svg class="r" style="left:1093.3px;top:358.3px" width="8" height="9" viewBox="0 0 8 9"><path d="M1.7 4.2 V3.1 Q1.7 0.7 3.6 0.7 Q5.5 0.7 5.5 3.1 V4.2" fill="none" stroke="#7b7b7b" stroke-width="1.4"/><rect x="0.2" y="4" width="6.9" height="4.9" rx="0.4" fill="#7b7b7b"/></svg>
<div class="t" style="left:1107.80px;top:357.96px;font-size:9.5px;line-height:9.5px;font-weight:700;color:#000;"><span class="i" style="transform:scaleX(0.9350)">12.04.2023</span></div>
<div class="t" style="left:1001.30px;top:390.06px;font-size:9.5px;line-height:9.5px;font-weight:700;color:#000;"><span class="i" style="transform:scaleX(0.9400)">Баланс</span></div>
<div class="t" style="left:1001.30px;top:415.46px;font-size:9.5px;line-height:9.5px;font-weight:400;color:#3a3a3a;width:85px;overflow:hidden;-webkit-mask-image:linear-gradient(to right,#000 76px,transparent 85px);"><span class="i" style="transform:scaleX(0.9100)">Дебет</span></div>
<svg class="r" style="left:1093.3px;top:414.3px" width="8" height="9" viewBox="0 0 8 9"><path d="M1.7 4.2 V3.1 Q1.7 0.7 3.6 0.7 Q5.5 0.7 5.5 3.1 V4.2" fill="none" stroke="#7b7b7b" stroke-width="1.4"/><rect x="0.2" y="4" width="6.9" height="4.9" rx="0.4" fill="#7b7b7b"/></svg>
<div class="t" style="left:1107.80px;top:413.96px;font-size:9.5px;line-height:9.5px;font-weight:700;color:#000;"><span class="i" style="transform:scaleX(0.9350)">244,38</span></div>
<div class="t" style="left:1001.30px;top:433.46px;font-size:9.5px;line-height:9.5px;font-weight:400;color:#3a3a3a;width:85px;overflow:hidden;-webkit-mask-image:linear-gradient(to right,#000 76px,transparent 85px);"><span class="i" style="transform:scaleX(0.9100)">Кредит</span></div>
<svg class="r" style="left:1093.3px;top:432.3px" width="8" height="9" viewBox="0 0 8 9"><path d="M1.7 4.2 V3.1 Q1.7 0.7 3.6 0.7 Q5.5 0.7 5.5 3.1 V4.2" fill="none" stroke="#7b7b7b" stroke-width="1.4"/><rect x="0.2" y="4" width="6.9" height="4.9" rx="0.4" fill="#7b7b7b"/></svg>
<div class="t" style="left:1107.80px;top:431.96px;font-size:9.5px;line-height:9.5px;font-weight:700;color:#000;"><span class="i" style="transform:scaleX(0.9350)">228,00</span></div>
<div class="t" style="left:1001.30px;top:451.46px;font-size:9.5px;line-height:9.5px;font-weight:400;color:#3a3a3a;width:85px;overflow:hidden;-webkit-mask-image:linear-gradient(to right,#000 76px,transparent 85px);"><span class="i" style="transform:scaleX(0.9100)">Общий баланс</span></div>
<svg class="r" style="left:1093.3px;top:450.3px" width="8" height="9" viewBox="0 0 8 9"><path d="M1.7 4.2 V3.1 Q1.7 0.7 3.6 0.7 Q5.5 0.7 5.5 3.1 V4.2" fill="none" stroke="#7b7b7b" stroke-width="1.4"/><rect x="0.2" y="4" width="6.9" height="4.9" rx="0.4" fill="#7b7b7b"/></svg>
<div class="t" style="left:1107.80px;top:449.96px;font-size:9.5px;line-height:9.5px;font-weight:700;color:#000;"><span class="i" style="transform:scaleX(0.9350)">16,38</span></div>
<div class="t" style="left:1001.30px;top:469.46px;font-size:9.5px;line-height:9.5px;font-weight:400;color:#3a3a3a;width:85px;overflow:hidden;-webkit-mask-image:linear-gradient(to right,#000 76px,transparent 85px);"><span class="i" style="transform:scaleX(0.9100)">Активный баланс</span></div>
<svg class="r" style="left:1093.3px;top:468.3px" width="8" height="9" viewBox="0 0 8 9"><path d="M1.7 4.2 V3.1 Q1.7 0.7 3.6 0.7 Q5.5 0.7 5.5 3.1 V4.2" fill="none" stroke="#7b7b7b" stroke-width="1.4"/><rect x="0.2" y="4" width="6.9" height="4.9" rx="0.4" fill="#7b7b7b"/></svg>
<div class="t" style="left:1107.80px;top:467.96px;font-size:9.5px;line-height:9.5px;font-weight:700;color:#000;"><span class="i" style="transform:scaleX(0.9350)">16,38</span></div>
<div class="t" style="left:1001.30px;top:500.46px;font-size:9.5px;line-height:9.5px;font-weight:700;color:#000;"><span class="i" style="transform:scaleX(0.9400)">Статусный баланс</span></div>
<div class="t" style="left:1001.30px;top:524.96px;font-size:9.5px;line-height:9.5px;font-weight:400;color:#3a3a3a;width:85px;overflow:hidden;-webkit-mask-image:linear-gradient(to right,#000 76px,transparent 85px);"><span class="i" style="transform:scaleX(0.9100)">Статусный дебет</span></div>
<svg class="r" style="left:1093.3px;top:523.8px" width="8" height="9" viewBox="0 0 8 9"><path d="M1.7 4.2 V3.1 Q1.7 0.7 3.6 0.7 Q5.5 0.7 5.5 3.1 V4.2" fill="none" stroke="#7b7b7b" stroke-width="1.4"/><rect x="0.2" y="4" width="6.9" height="4.9" rx="0.4" fill="#7b7b7b"/></svg>
<div class="t" style="left:1107.80px;top:523.46px;font-size:9.5px;line-height:9.5px;font-weight:700;color:#000;"><span class="i" style="transform:scaleX(0.9350)">0,00</span></div>
<div class="t" style="left:1001.30px;top:542.96px;font-size:9.5px;line-height:9.5px;font-weight:400;color:#3a3a3a;width:85px;overflow:hidden;-webkit-mask-image:linear-gradient(to right,#000 76px,transparent 85px);"><span class="i" style="transform:scaleX(0.9100)">Статусный кредит</span></div>
<svg class="r" style="left:1093.3px;top:541.8px" width="8" height="9" viewBox="0 0 8 9"><path d="M1.7 4.2 V3.1 Q1.7 0.7 3.6 0.7 Q5.5 0.7 5.5 3.1 V4.2" fill="none" stroke="#7b7b7b" stroke-width="1.4"/><rect x="0.2" y="4" width="6.9" height="4.9" rx="0.4" fill="#7b7b7b"/></svg>
<div class="t" style="left:1107.80px;top:541.46px;font-size:9.5px;line-height:9.5px;font-weight:700;color:#000;"><span class="i" style="transform:scaleX(0.9350)">0,00</span></div>
<div class="r" style="left:679px;top:336px;width:179px;height:19px;background:transparent;box-sizing:border-box;border:3px solid #ff0000;border-radius:2.5px;"></div>
<div class="t" style="left:868.20px;top:333.50px;font-size:15px;line-height:15px;font-weight:400;color:#ff0000;-webkit-text-stroke:0.3px #ff0000;font-family:'Liberation Serif',serif;"><span class="i" style="transform:scaleX(0.9500)">1</span></div>
<div class="r" style="left:6px;top:446px;width:198px;height:22px;background:transparent;box-sizing:border-box;border:3px solid #ff0000;border-radius:2.5px;"></div>
<div class="t" style="left:216.60px;top:451.37px;font-size:14.8px;line-height:14.8px;font-weight:400;color:#ff0000;"><span class="i" style="transform:scaleX(0.9200)">2</span></div>
</body></html>
